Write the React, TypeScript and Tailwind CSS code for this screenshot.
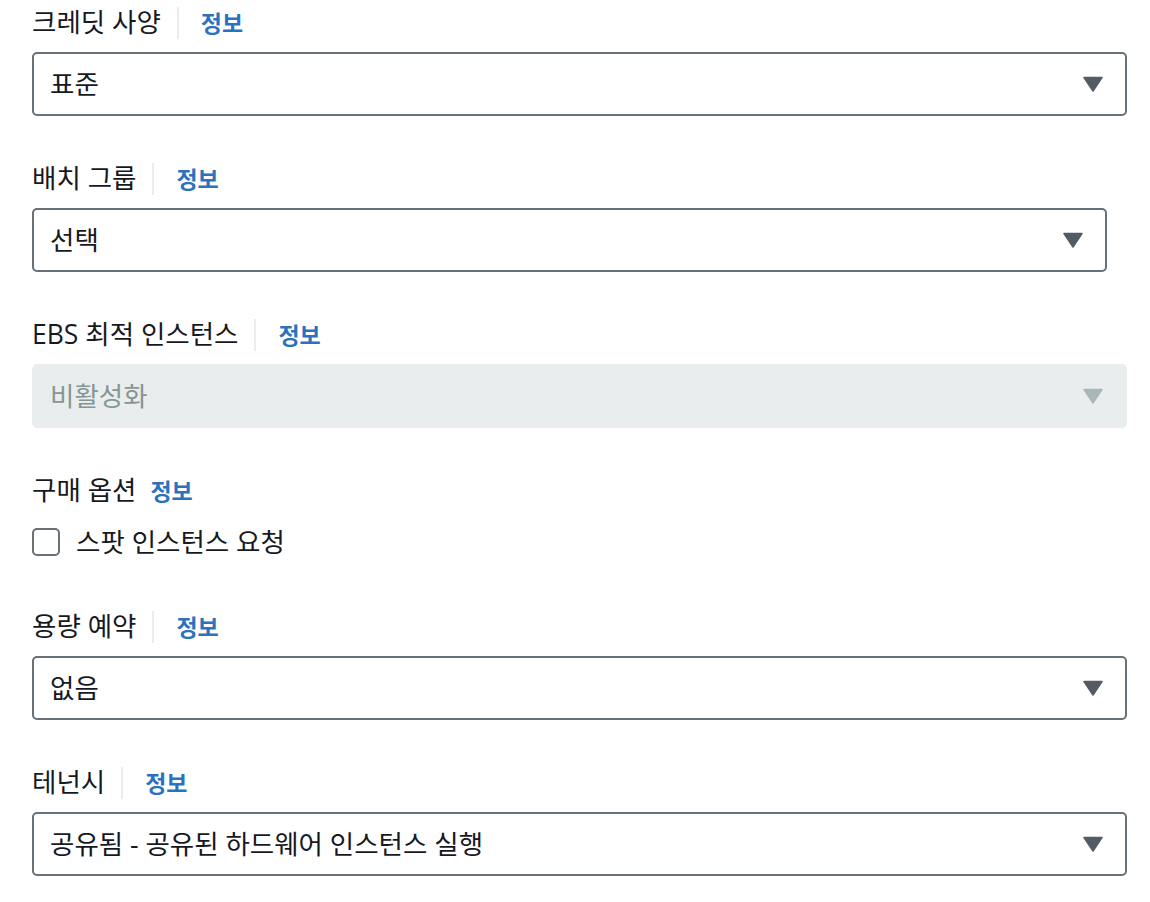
const font = '"Open Sans", "Noto Sans CJK KR", sans-serif'

type FieldProps = {
  label: string
  divider?: boolean
  children: React.ReactNode
}

function Field({ label, divider = true, children }: FieldProps) {
  return (
    <div className="flex flex-col gap-2">
      <div className="flex items-center h-11 pt-[2px]">
        <span className="text-[26.5px] text-[#16191f]">{label}</span>
        {divider ? (
          <>
            <span className="ml-4 w-[2px] h-[32px] bg-[#eaeded]" />
            <a className="ml-[22px] text-[23px] font-bold text-[#2a72c0]">정보</a>
          </>
        ) : (
          <a className="ml-[14px] text-[23px] font-bold text-[#2a72c0]">정보</a>
        )}
      </div>
      {children}
    </div>
  )
}

function Caret({ color }: { color: string }) {
  return (
    <svg width="20" height="16" viewBox="0 0 20 16" className="shrink-0">
      <path d="M1 1.5 H19 L10 15 Z" fill={color} stroke={color} strokeWidth="1.5" strokeLinejoin="round" />
    </svg>
  )
}

function Select({ value, disabled = false, wide = true }: { value: string; disabled?: boolean; wide?: boolean }) {
  return (
    <div
      className={`h-16 flex items-center justify-between pl-4 pr-[22px] rounded-[5px] border-2 ${
        wide ? 'w-[1095px]' : 'w-[1075px]'
      } ${disabled ? 'bg-[#eaeded] border-[#eaeded]' : 'bg-white border-[#687078]'}`}
    >
      <span className={`pt-[2px] text-[26.5px] ${disabled ? 'text-[#879596]' : 'text-[#16191f]'}`}>{value}</span>
      <Caret color={disabled ? '#aab7b8' : '#545b64'} />
    </div>
  )
}

export default function App() {
  return (
    <div className="min-h-[902px] w-[1150px] bg-white pl-8 flex flex-col gap-10" style={{ fontFamily: font }}>
      <Field label="크레딧 사양">
        <Select value="표준" />
      </Field>
      <Field label="배치 그룹">
        <Select value="선택" wide={false} />
      </Field>
      <Field label="EBS 최적 인스턴스">
        <Select value="비활성화" disabled />
      </Field>
      <Field label="구매 옵션" divider={false}>
        <label className="flex items-center h-11">
          <span className="w-[28px] h-[28px] rounded-[5px] border-2 border-[#687078] bg-white" />
          <span className="ml-4 pt-[2px] text-[26.5px] text-[#16191f]">스팟 인스턴스 요청</span>
        </label>
      </Field>
      <Field label="용량 예약">
        <Select value="없음" />
      </Field>
      <Field label="테넌시">
        <Select value="공유됨 - 공유된 하드웨어 인스턴스 실행" />
      </Field>
    </div>
  )
}
